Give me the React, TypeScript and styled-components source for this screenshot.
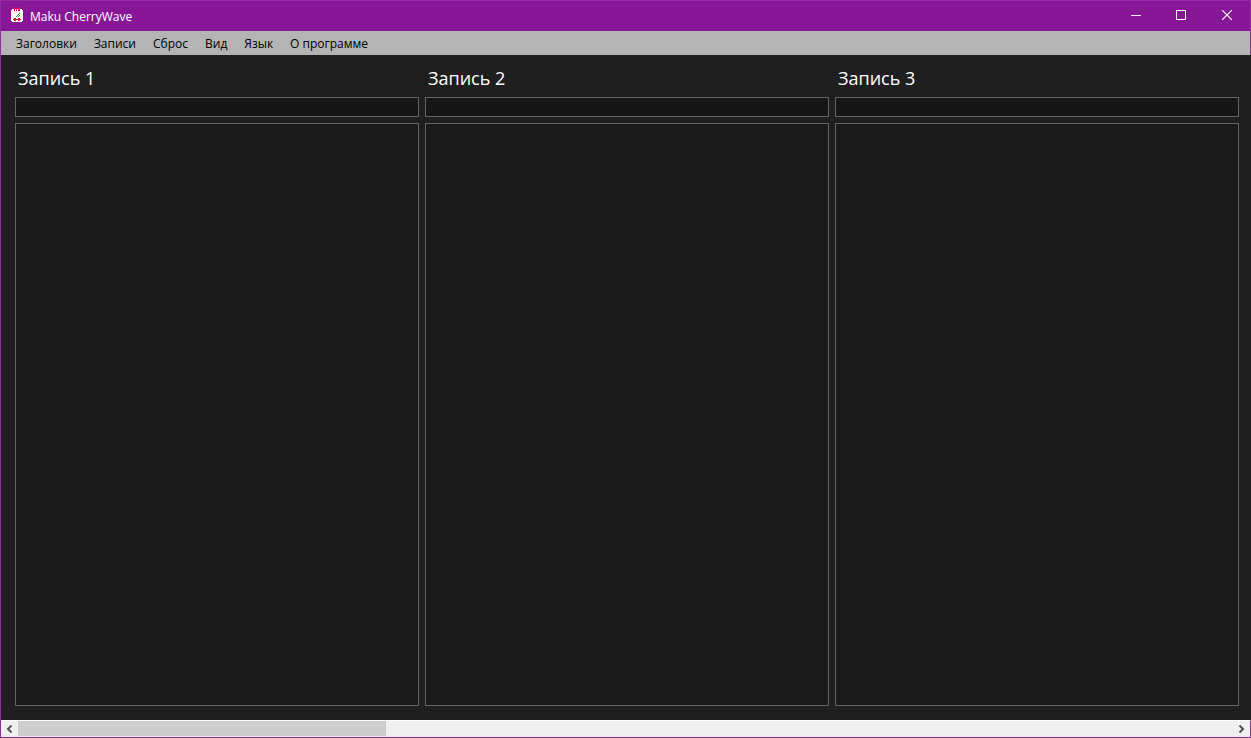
import React from "react";
import styled, { createGlobalStyle } from "styled-components";

const accent = "#881798";
const edge = "#922da1";

const GlobalStyle = createGlobalStyle`
  *, *::before, *::after { box-sizing: border-box; }
  body { margin: 0; background: #1f1f1f; }
  button, input, textarea { font: inherit; color: inherit; border-radius: 0; }
`;

const AppWindow = styled.div`
  display: flex;
  flex-direction: column;
  height: 100vh;
  border: 1px solid ${edge};
  border-right: 0;
  background: #1f1f1f;
  font-family: "Open Sans", "Noto Sans", sans-serif;
  font-size: 12px;
  line-height: 16px;
  overflow: hidden;
`;

const TitleBar = styled.header`
  display: flex;
  align-items: center;
  flex: none;
  height: 30px;
  padding-left: 9px;
  gap: 6px;
  background: ${accent};
  border-right: 1px solid ${edge};
  color: #fff;
`;

const Title = styled.h1`
  flex: 1;
  margin: 0;
  padding-top: 2px;
  font-size: 12px;
  font-weight: 400;
`;

const Controls = styled.div`
  display: flex;
  align-self: stretch;
`;

const ControlButton = styled.button`
  display: flex;
  align-items: center;
  justify-content: center;
  width: 46px;
  padding: 0 0 2px;
  border: 0;
  background: transparent;
`;

const MenuBar = styled.nav`
  display: flex;
  flex: none;
  height: 24px;
  padding-left: 7px;
  gap: 1px;
  background: #b4b4b4;
  border-right: 1px solid ${edge};
`;

const MenuItem = styled.button`
  padding: 2px 8px 0;
  border: 0;
  background: transparent;
  color: #000;
`;

const Board = styled.main`
  display: flex;
  flex: 1;
  min-height: 0;
  gap: 6px;
  padding: 10px 12px 14px 14px;
`;

const Column = styled.section`
  display: flex;
  flex-direction: column;
  flex: 1;
  min-width: 0;
  gap: 6px;
`;

const ColumnLabel = styled.label`
  padding: 0 3px;
  color: #fff;
  font-size: 18px;
  line-height: 26px;
`;

const Heading = styled.input`
  flex: none;
  width: 100%;
  height: 20px;
  padding: 0 3px;
  border: 1px solid #646464;
  outline: 0;
  background: #161616;
  color: #fff;
`;

const Notes = styled.textarea`
  flex: 1;
  width: 100%;
  padding: 3px;
  border: 1px solid #646464;
  outline: 0;
  resize: none;
  background: #1a1a1a;
  color: #fff;
`;

const ScrollBar = styled.div`
  display: flex;
  flex: none;
  height: 17px;
  border-top: 1px solid #fff;
  border-right: 1px solid ${edge};
  background: #f0f0f0;
  color: #505050;
`;

const ScrollButton = styled.button`
  display: flex;
  align-items: center;
  justify-content: center;
  width: 17px;
  padding: 0 0 1px;
  border: 0;
  background: transparent;
`;

const Track = styled.div`
  flex: 1;
  padding-bottom: 1px;
`;

const Thumb = styled.div`
  height: 100%;
  background: #cdcdcd;
`;

const AppIcon = () => (
  <svg width="14" height="18" viewBox="0 0 14 18" shapeRendering="crispEdges" aria-hidden="true">
    <path fill="#fff" d="M2 2h10v1h1v11h-1v1H2v-1H1V3h1z" />
    <path fill="#f5055a" d="M4 0h1v4H4zM6 1h1v3H6zM8 1h1v3H8zM9 0h1v4H9z" />
    <path fill="#22b02c" d="M9 6h1v1H9zM8 7h1v1H8zM7 8h1v1H7zM9 8h1v1H9zM6 9h1v1H6zM8 9h1v1H8z" />
    <path fill="#ed1040" d="M4 11h2v1h2v-1h2v1h1v1h-1v1H8v-1H6v1H4v-1H3v-1h1z" />
  </svg>
);

const menu = ["Заголовки", "Записи", "Сброс", "Вид", "Язык", "О программе"];
const columns = [1, 2, 3];
const visibleShare = 30.3;

export default function App() {
  return (
    <>
      <GlobalStyle />
      <AppWindow>
        <TitleBar>
          <AppIcon />
          <Title>Maku CherryWave</Title>
          <Controls>
            <ControlButton aria-label="Свернуть">
              <svg width="12" height="10" viewBox="0 0 12 10" shapeRendering="crispEdges">
                <path fill="#fff" d="M2 5h10v1H2z" />
              </svg>
            </ControlButton>
            <ControlButton aria-label="Развернуть">
              <svg width="10" height="10" viewBox="0 0 10 10" shapeRendering="crispEdges">
                <path fill="#fff" fillRule="evenodd" d="M0 0h10v10H0zM1 1v8h8V1z" />
              </svg>
            </ControlButton>
            <ControlButton aria-label="Закрыть">
              <svg width="10" height="10" viewBox="0 0 10 10">
                <path stroke="#fff" strokeWidth="1.2" d="M0 0l10 10M10 0L0 10" />
              </svg>
            </ControlButton>
          </Controls>
        </TitleBar>
        <MenuBar>
          {menu.map((item) => (
            <MenuItem key={item}>{item}</MenuItem>
          ))}
        </MenuBar>
        <Board>
          {columns.map((n) => (
            <Column key={n}>
              <ColumnLabel id={`label-${n}`} htmlFor={`heading-${n}`}>
                Запись {n}
              </ColumnLabel>
              <Heading id={`heading-${n}`} type="text" />
              <Notes aria-labelledby={`label-${n}`} />
            </Column>
          ))}
        </Board>
        <ScrollBar>
          <ScrollButton aria-label="Прокрутить влево">
            <svg width="7" height="8" viewBox="0 0 7 8">
              <path fill="none" stroke="currentColor" strokeWidth="2" d="M5.500 .5L2 4l3.500 3.500" />
            </svg>
          </ScrollButton>
          <Track>
            <Thumb style={{ width: `${visibleShare}%` }} />
          </Track>
          <ScrollButton aria-label="Прокрутить вправо">
            <svg width="7" height="8" viewBox="0 0 7 8">
              <path fill="none" stroke="currentColor" strokeWidth="2" d="M1.500 .5L5 4L1.500 7.500" />
            </svg>
          </ScrollButton>
        </ScrollBar>
      </AppWindow>
    </>
  );
}
